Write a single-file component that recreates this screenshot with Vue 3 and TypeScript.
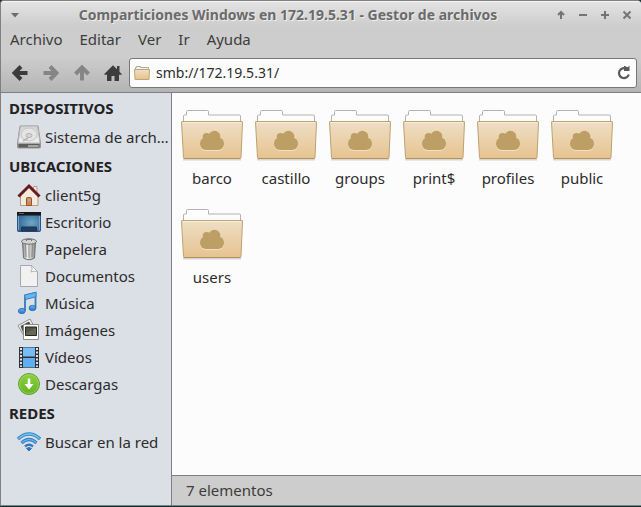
<script setup lang="ts">
import { ref } from 'vue'

type IconName =
  | 'disk' | 'home' | 'desktop' | 'trash' | 'document'
  | 'music' | 'pictures' | 'video' | 'download' | 'wifi'

interface Place {
  label: string
  icon: IconName
}

interface PlaceGroup {
  title: string
  places: Place[]
}

const menus: string[] = ['Archivo', 'Editar', 'Ver', 'Ir', 'Ayuda']
const location = ref<string>('smb://172.19.5.31/')
const shares: string[] = ['barco', 'castillo', 'groups', 'print$', 'profiles', 'public', 'users']

const groups: PlaceGroup[] = [
  { title: 'DISPOSITIVOS', places: [{ label: 'Sistema de arch…', icon: 'disk' }] },
  {
    title: 'UBICACIONES',
    places: [
      { label: 'client5g', icon: 'home' },
      { label: 'Escritorio', icon: 'desktop' },
      { label: 'Papelera', icon: 'trash' },
      { label: 'Documentos', icon: 'document' },
      { label: 'Música', icon: 'music' },
      { label: 'Imágenes', icon: 'pictures' },
      { label: 'Vídeos', icon: 'video' },
      { label: 'Descargas', icon: 'download' },
    ],
  },
  { title: 'REDES', places: [{ label: 'Buscar en la red', icon: 'wifi' }] },
]
</script>

<template>
  <div class="window">
    <svg class="defs" width="0" height="0" aria-hidden="true">
      <defs>
        <linearGradient id="folderFront" x1="0" y1="0" x2="0" y2="1">
          <stop offset="0" stop-color="#eedfc5" />
          <stop offset="1" stop-color="#e6c390" />
        </linearGradient>
        <linearGradient id="metal" x1="0" y1="0" x2="1" y2="0">
          <stop offset="0" stop-color="#8c8c8c" />
          <stop offset="0.4" stop-color="#efefef" />
          <stop offset="1" stop-color="#888" />
        </linearGradient>
        <linearGradient id="blue" x1="0" y1="0" x2="0" y2="1">
          <stop offset="0" stop-color="#64b8f4" />
          <stop offset="1" stop-color="#2c74c0" />
        </linearGradient>
        <radialGradient id="screen" cx="0.6" cy="0.55" r="0.7">
          <stop offset="0" stop-color="#6fa9c4" />
          <stop offset="1" stop-color="#2a5f98" />
        </radialGradient>
        <linearGradient id="green" x1="0" y1="0" x2="0" y2="1">
          <stop offset="0" stop-color="#8fd244" />
          <stop offset="1" stop-color="#64b322" />
        </linearGradient>
        <linearGradient id="plate" x1="0" y1="0" x2="0" y2="1">
          <stop offset="0" stop-color="#d2d2d2" />
          <stop offset="1" stop-color="#f0f0f0" />
        </linearGradient>
      </defs>
    </svg>

    <header class="chrome">
      <div class="titlebar">
        <button class="wm" type="button" aria-label="Menú de la ventana">
          <svg width="10" height="10" viewBox="0 0 10 10"><path d="M1 3h8L5 7.500z" fill="#6c6c6c" /></svg>
        </button>
        <h1>Comparticiones Windows en 172.19.5.31 - Gestor de archivos</h1>
        <div class="wm-group">
          <button class="wm" type="button" aria-label="Enrollar">
            <svg width="10" height="10" viewBox="0 0 10 10"><path d="M5 9V2M2 5l3-3 3 3" /></svg>
          </button>
          <button class="wm" type="button" aria-label="Minimizar">
            <svg width="10" height="10" viewBox="0 0 10 10"><path d="M1 5h8" /></svg>
          </button>
          <button class="wm" type="button" aria-label="Maximizar">
            <svg width="10" height="10" viewBox="0 0 10 10"><path d="M1 5h8M5 1v8" /></svg>
          </button>
          <button class="wm" type="button" aria-label="Cerrar">
            <svg width="10" height="10" viewBox="0 0 10 10"><path d="M1.500 1.500l7 7M8.500 1.500l-7 7" /></svg>
          </button>
        </div>
      </div>

      <nav class="menubar">
        <button v-for="menu in menus" :key="menu" type="button">{{ menu }}</button>
      </nav>

      <div class="toolbar">
        <button class="tool" type="button" aria-label="Atrás">
          <svg width="16" height="16" viewBox="0 0 16 16"><path d="M15.500 8H3M9 1.500L2.500 8 9 14.500" stroke="#3c3c3c" /></svg>
        </button>
        <button class="tool" type="button" aria-label="Adelante" disabled>
          <svg width="16" height="16" viewBox="0 0 16 16"><path d="M.500 8H13M7 1.500L13.500 8 7 14.500" stroke="#858585" /></svg>
        </button>
        <button class="tool" type="button" aria-label="Subir" disabled>
          <svg width="16" height="16" viewBox="0 0 16 16"><path d="M8 15.500V3M1.500 9L8 2.500 14.500 9" stroke="#858585" /></svg>
        </button>
        <button class="tool" type="button" aria-label="Carpeta personal">
          <svg width="18" height="16" viewBox="0 0 18 16">
            <path d="M9 .300L.300 9v.800H3V16h4.500v-5h3v5H15V9.800h2.700V9L15.500 6.800V1H13v3.300z" fill="#3c3c3c" stroke="none" />
          </svg>
        </button>
        <div class="address">
          <svg width="16" height="14" viewBox="0 0 16 14">
            <path d="M1.500 6V1.500h1v-1h4v1h8V6" fill="#f4f4f4" stroke="#a9a9a9" />
            <path d="M.500 3.500h15l-.500 10H1z" fill="url(#folderFront)" stroke="#c3a46b" />
          </svg>
          <input v-model="location" type="text" aria-label="Ubicación" spellcheck="false">
          <button class="reload" type="button" aria-label="Recargar">
            <svg width="14" height="16" viewBox="0 0 14 16">
              <path d="M9.500 3.800A5 5 0 1 0 11.800 9.500" fill="none" stroke="#5a5a5a" stroke-width="2.200" />
              <path d="M7 .700V6h5.500V.500L10.800 2.300z" fill="#5a5a5a" />
            </svg>
          </button>
        </div>
      </div>
    </header>

    <div class="body">
      <aside class="sidebar">
        <section v-for="group in groups" :key="group.title">
          <h2>{{ group.title }}</h2>
          <ul>
            <li v-for="place in group.places" :key="place.label">
              <a href="#">
                <svg width="24" height="24" viewBox="0 0 24 24" aria-hidden="true">
                  <g v-if="place.icon === 'disk'">
                    <path d="M3 1h18l2.500 17v4a1 1 0 0 1-1 1h-21a1 1 0 0 1-1-1v-4z" fill="#989898" stroke="#969696" />
                    <path d="M3.500 1h17l2.500 17H1z" fill="url(#plate)" stroke="#b5b5b5" />
                    <path d="M1.500 19h21v3.500h-21z" fill="#5e5e5e" />
                    <path d="M11 20h10.500v2H11z" fill="#a5a5a5" />
                    <ellipse cx="12" cy="9.500" rx="8" ry="6.500" fill="#e4e4e4" stroke="#c6c6c6" />
                    <ellipse cx="12" cy="10.500" rx="3" ry="2" fill="#d6d6d6" stroke="#b2b2b2" />
                    <path d="M6 16l5-3" stroke="#b4b4b4" stroke-width="1.500" />
                  </g>
                  <g v-else-if="place.icon === 'home'">
                    <path d="M16.500 3.500h3.500v6h-3.500z" fill="#f4e6d8" stroke="#bd9f87" />
                    <path d="M3.500 12L12 4l9 8v10.500H3.500z" fill="#f6e9dd" stroke="#b79a84" />
                    <path d="M9.500 22.500v-7q0-1 1-1h3q1 0 1 1v7z" fill="#cf8650" stroke="#9b5528" />
                    <path d="M11 16h2.500v2.500H11z" fill="#a8b0a8" />
                    <path d="M1.500 13.500L12 3l10.500 10.500" fill="none" stroke="#651c20" stroke-width="3" />
                  </g>
                  <g v-else-if="place.icon === 'desktop'">
                    <rect x=".500" y="2.500" width="23" height="19" rx="1" fill="url(#screen)" stroke="#2c5280" />
                    <path d="M0 2h24v3.500H0z" fill="#17181b" />
                    <path d="M2 3.500h5" stroke="#606060" />
                    <path d="M4.500 17h15v4h-15z" fill="#233f60" stroke="#1c3450" />
                    <path d="M1.500 6v14M22.500 6v14" stroke="#75a6c9" />
                  </g>
                  <g v-else-if="place.icon === 'trash'">
                    <path d="M5.500 5l1 16q5.500 3.500 11 0l1-16z" fill="url(#metal)" stroke="#727272" />
                    <path d="M8.500 7l.5 13M12 7v14M15.500 7L15 20" stroke="#8a8a8a" />
                    <ellipse cx="12" cy="4.500" rx="7.500" ry="2.700" fill="#d4d4d4" stroke="#707070" />
                    <path d="M9.500 4V2.500h5V4" fill="none" stroke="#707070" />
                  </g>
                  <g v-else-if="place.icon === 'document'">
                    <path d="M3.500 1.500h11l6 6v15h-17z" fill="#f1f1f1" stroke="#a8a8a8" />
                    <path d="M14.500 1.500q1.500 4-.5 6.500 3-1.500 6.500-.5z" fill="#fff" stroke="#b2b2b2" />
                  </g>
                  <g v-else-if="place.icon === 'music'">
                    <path d="M8 20V4.500L18.500 2v15" fill="none" stroke="#347cbc" stroke-width="1.800" />
                    <path d="M7.500 4L19 1.300v4.500L8.500 8.500z" fill="#65b5f0" stroke="#3b83c4" />
                    <ellipse cx="4.800" cy="20" rx="3.400" ry="2.600" fill="url(#blue)" stroke="#2d71b2" />
                    <ellipse cx="15.500" cy="17" rx="3.400" ry="2.600" fill="url(#blue)" stroke="#2d71b2" />
                  </g>
                  <g v-else-if="place.icon === 'pictures'">
                    <path d="M1 7.500L13 1l5 9-11 8z" fill="#f5f5f5" stroke="#8f8f8f" />
                    <path d="M3.500 8L12 3.500l3 5-9 6z" fill="#4c4d45" />
                    <path d="M6.500 6.500h15v15h-15z" fill="#fcfcfc" stroke="#8d8d8d" />
                    <path d="M8.500 9h11v8.500h-11z" fill="#535448" stroke="#272722" />
                    <path d="M9 15l10-5v7H9z" fill="#76755f" opacity=".6" />
                  </g>
                  <g v-else-if="place.icon === 'video'">
                    <path d="M2 2h20v21H2z" fill="#303236" />
                    <path d="M6 2.500h12v9H6z" fill="#77bdf5" />
                    <path d="M6 13h12v9.500H6z" fill="#60aef0" />
                    <path d="M4 3v19M20 3v19" stroke="#e3e5e8" stroke-width="2" stroke-dasharray="2 1.500" />
                  </g>
                  <g v-else-if="place.icon === 'download'">
                    <circle cx="12" cy="12" r="10.500" fill="url(#green)" stroke="#5ba224" />
                    <circle cx="12" cy="12" r="9.500" fill="none" stroke="#a6dc6c" opacity=".6" />
                    <path d="M10.700 6.500h2.600V12h3.200L12 17.500 7.500 12h3.200z" fill="#fff" />
                  </g>
                  <g v-else fill="none">
                    <path d="M1 9Q12-1 23 9" stroke="#3587c9" stroke-width="3.400" />
                    <path d="M1.500 8.500Q12-.5 22.500 8.500" stroke="#73c5f1" stroke-width="1.500" />
                    <path d="M4.500 13Q12 6 19.500 13" stroke="#347fc5" stroke-width="3.200" />
                    <path d="M5 12.500Q12 6.500 19 12.500" stroke="#6dbaf0" stroke-width="1.200" />
                    <path d="M8 16.500q4-3.500 8 0" stroke="#3479bf" stroke-width="2.400" />
                    <path d="M9.500 18.500q2.500-2 5 0L12 21z" fill="#3475ba" stroke="#3475ba" />
                  </g>
                </svg>
                <span>{{ place.label }}</span>
              </a>
            </li>
          </ul>
        </section>
      </aside>

      <div class="pane">
        <main class="files">
          <a v-for="share in shares" :key="share" class="share" href="#">
            <svg width="64" height="54" viewBox="0 0 64 54" aria-hidden="true">
              <path d="M3 51.500h58" stroke="#000" stroke-width="2" opacity=".15" />
              <path d="M3.500 16V8q0-1 1-1h2V3.500q0-1 1-1h20q1 0 1 1V7h31q1 0 1 1v8z" fill="#fdfdfd" stroke="#b2b2b2" />
              <path d="M2 13.500h60q.600 0 .500.700L61 49.500q0 1-1 1H4.500q-1 0-1-1L1.500 14.200q0-.7.500-.7z" fill="url(#folderFront)" stroke="#bda270" />
              <path d="M3 14.500h58" stroke="#f8eedd" />
              <path d="M4 50.500h56" stroke="#b3935a" />
              <rect x="20" y="31" width="24" height="12" rx="6" fill="#f3e0c0" />
              <g fill="#bd9f65">
                <rect x="20" y="29.500" width="24" height="12.500" rx="6" />
                <circle cx="34.500" cy="28.500" r="5.800" />
                <circle cx="26.700" cy="29" r="4" />
              </g>
            </svg>
            <span>{{ share }}</span>
          </a>
        </main>
        <footer class="status">7 elementos</footer>
      </div>
    </div>
  </div>
</template>

<style>
body {
  margin: 0;
  background: #0b3534;
}
</style>

<style scoped>
.window {
  box-sizing: border-box;
  display: flex;
  flex-direction: column;
  min-height: calc(100vh - 1px);
  border: 1px solid #808080;
  border-right: 0;
  border-radius: 4px 4px 0 0;
  overflow: hidden;
  background: #cdcdcd;
  color: #2c2c2c;
  font: 15px/20px "Noto Sans", "Open Sans", sans-serif;
}

.defs {
  position: absolute;
}

button {
  padding: 0;
  border: 0;
  background: none;
  color: inherit;
  font: inherit;
}

svg {
  display: block;
  flex: none;
}

.chrome {
  border-top: 1px solid #f6f6f6;
  border-bottom: 1px solid #808080;
  background: linear-gradient(#e3e3e3 0, #cdcdcd 24px, #cdcdcd 55px, #b4b4b4 100%);
}

.titlebar {
  display: flex;
  align-items: center;
  height: 25px;
  padding: 0 8px;
}

.titlebar h1 {
  flex: 1;
  margin: 0;
  color: #6b6b6b;
  font-size: 14px;
  font-weight: 700;
  text-align: center;
  text-shadow: 1px 1px #eee;
  white-space: nowrap;
}

.wm {
  display: grid;
  place-items: center;
  width: 12px;
  height: 20px;
}

.wm svg {
  fill: none;
  stroke: #747474;
  stroke-width: 2;
}

.wm:first-child > svg path[fill] {
  stroke: none;
}

.wm-group {
  display: flex;
  gap: 10px;
}

.menubar {
  display: flex;
  gap: 17px;
  height: 23px;
  padding: 0 9px;
  align-items: center;
  color: #3c3c3c;
}

.toolbar {
  display: flex;
  align-items: center;
  padding: 8px 4px 4px 3px;
}

.tool {
  display: grid;
  place-items: center;
  width: 31px;
  height: 30px;
}

.tool svg {
  fill: none;
  stroke-width: 4;
}

.address {
  box-sizing: border-box;
  display: flex;
  flex: 1;
  align-items: center;
  gap: 6px;
  height: 30px;
  margin-left: 1px;
  padding: 0 5px 0 4px;
  border: 1px solid #777;
  border-radius: 3px;
  background: #fcfcfc;
}

.address input {
  flex: 1;
  min-width: 0;
  padding: 0;
  border: 0;
  outline: 0;
  background: none;
  color: #2c2c2c;
  font: inherit;
  font-size: 14px;
}

.body {
  display: flex;
  flex: 1;
}

.sidebar {
  box-sizing: border-box;
  flex: none;
  width: 171px;
  border-right: 1px solid #808080;
  background: #dbdfe6;
}

.sidebar h2 {
  height: 30px;
  margin: 0;
  padding-left: 8px;
  color: #222;
  font-size: 15px;
  font-weight: 700;
  line-height: 31px;
}

.sidebar ul {
  margin: 0;
  padding: 0 0 1px;
  list-style: none;
}

.sidebar a {
  display: flex;
  align-items: center;
  gap: 4px;
  height: 27px;
  padding-left: 16px;
  color: inherit;
  text-decoration: none;
}

.sidebar span {
  white-space: nowrap;
}

.pane {
  display: flex;
  flex: 1;
  flex-direction: column;
  min-width: 0;
}

.files {
  display: grid;
  flex: 1;
  grid-template-columns: repeat(auto-fill, 74px);
  grid-auto-rows: 99px;
  align-content: start;
  padding: 15px 0 0 3px;
  background: #fcfcfc;
}

.share {
  display: flex;
  flex-direction: column;
  align-items: center;
  gap: 6px;
  color: inherit;
  text-decoration: none;
}

.status {
  padding: 4px 14px 5px;
  border-top: 1px solid #808080;
  color: #3c3c3c;
}
</style>
